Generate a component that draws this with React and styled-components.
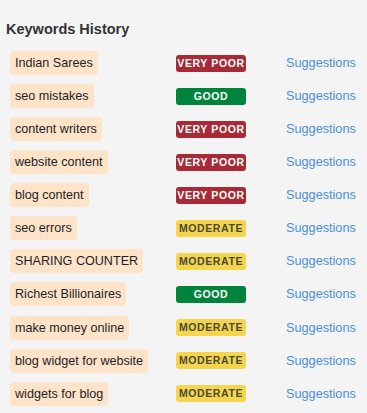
import React from 'react';
import styled, { createGlobalStyle } from 'styled-components';

const KEYWORDS = [
  ['Indian Sarees', 'poor'],
  ['seo mistakes', 'good'],
  ['content writers', 'poor'],
  ['website content', 'poor'],
  ['blog content', 'poor'],
  ['seo errors', 'moderate'],
  ['SHARING COUNTER', 'moderate'],
  ['Richest Billionaires', 'good'],
  ['make money online', 'moderate'],
  ['blog widget for website', 'moderate'],
  ['widgets for blog', 'moderate'],
];

const LABELS = { poor: 'VERY POOR', good: 'GOOD', moderate: 'MODERATE' };

const BADGE_COLORS = {
  poor: { bg: '#a82a36', fg: '#ffffff' },
  good: { bg: '#00843c', fg: '#ffffff' },
  moderate: { bg: '#f5d54c', fg: '#4a4a3a' },
};

const GlobalStyle = createGlobalStyle`
  html, body {
    margin: 0;
    background: #f4f4f4;
  }
  body {
    font-family: Arial, "Liberation Sans", sans-serif;
  }
`;

const Panel = styled.div`
  width: 367px;
  height: 413px;
  padding: 19px 0 0 6px;
  box-sizing: border-box;
  background: #f4f4f4;
`;

const Title = styled.h2`
  margin: 0 0 12px 0;
  font-size: 14.5px;
  font-weight: bold;
  color: #333333;
  line-height: 20px;
`;

const List = styled.div`
  display: flex;
  flex-direction: column;
  gap: 9.07px;
  padding-left: 4px;
`;

const Row = styled.div`
  display: grid;
  grid-template-columns: 166px 110px auto;
  align-items: center;
  height: 24px;
`;

const Chip = styled.span`
  justify-self: start;
  display: inline-block;
  background: #fde3c8;
  border-radius: 4px;
  padding: 0 5px;
  height: 24px;
  line-height: 24px;
  font-size: 12.6px;
  color: #1e1e2a;
  white-space: nowrap;
`;

const Badge = styled.span`
  width: 70px;
  height: 17px;
  line-height: 17px;
  border-radius: 3px;
  text-align: center;
  font-size: 10.5px;
  font-weight: bold;
  letter-spacing: 0.6px;
  background: ${p => BADGE_COLORS[p.$level].bg};
  color: ${p => BADGE_COLORS[p.$level].fg};
`;

const Link = styled.a`
  font-size: 12.7px;
  color: #4a90d9;
  text-decoration: none;
  cursor: pointer;
`;

export default function App() {
  return (
    <Panel>
      <GlobalStyle />
      <Title>Keywords History</Title>
      <List>
        {KEYWORDS.map(([word, level]) => (
          <Row key={word}>
            <Chip>{word}</Chip>
            <Badge $level={level}>{LABELS[level]}</Badge>
            <Link>Suggestions</Link>
          </Row>
        ))}
      </List>
    </Panel>
  );
}
